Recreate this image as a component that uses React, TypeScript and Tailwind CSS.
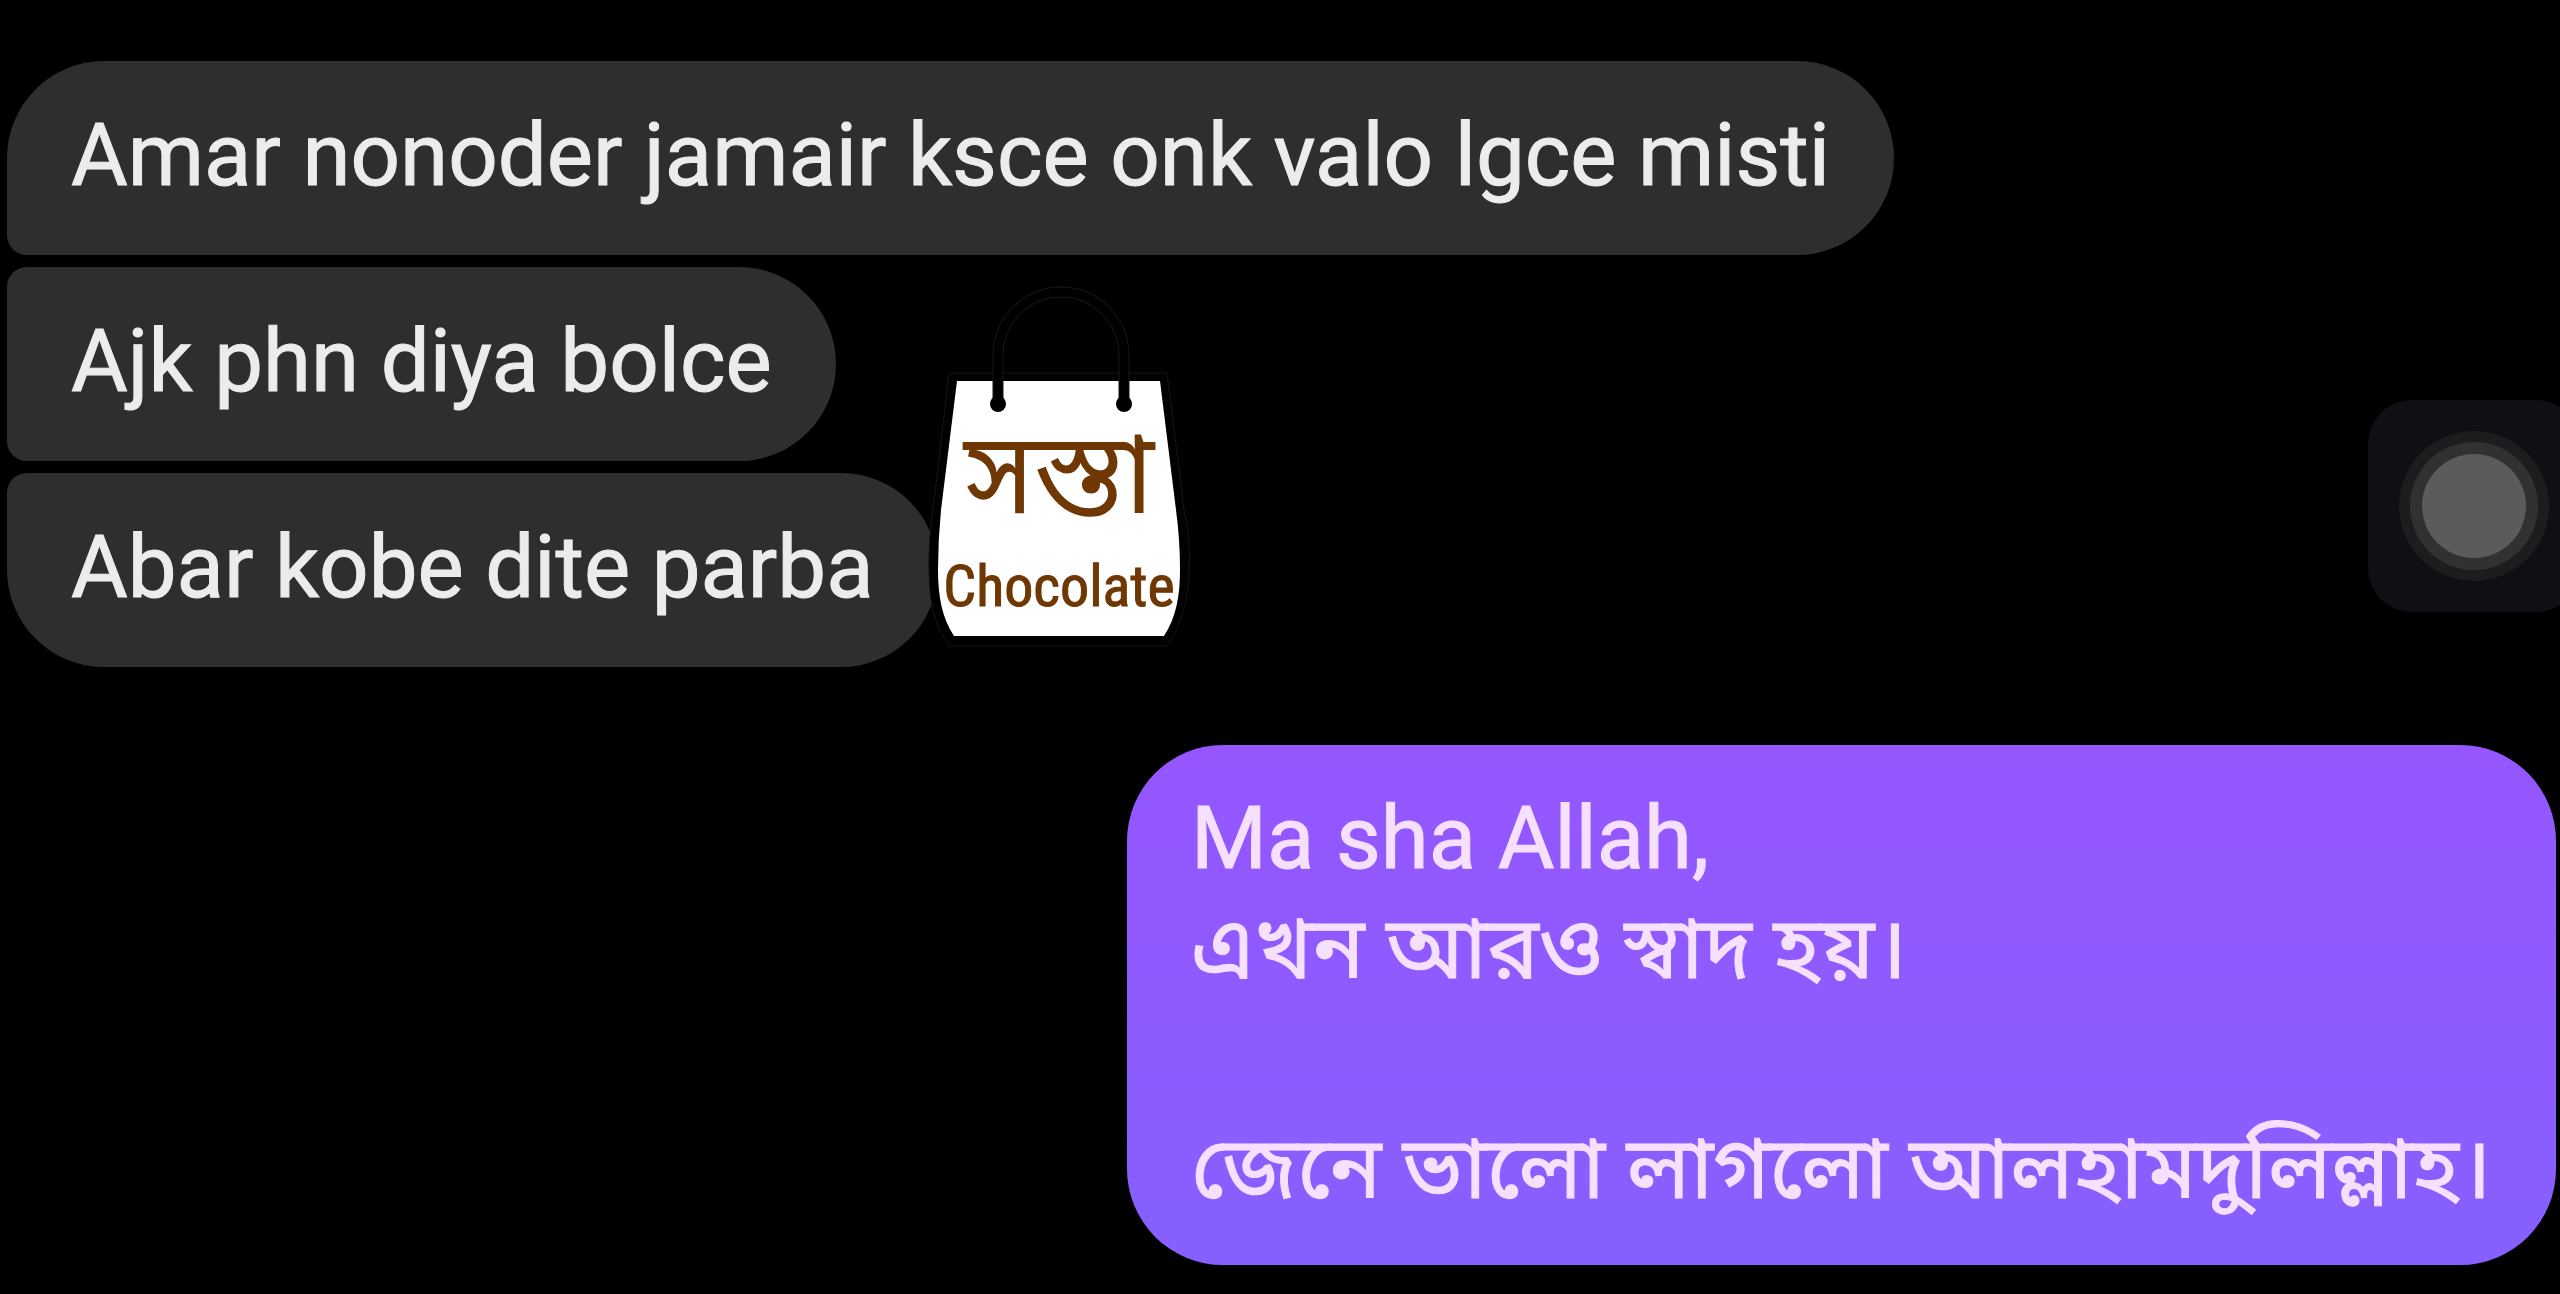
type ReceivedMessage = {
  id: string;
  text: string;
  shape: string;
};

const OPENING: ReceivedMessage = {
  id: "m1",
  text: "Amar nonoder jamair ksce onk valo lgce misti",
  shape: "rounded-[97px] rounded-bl-[20px]",
};

const FOLLOW_UPS: ReceivedMessage[] = [
  { id: "m2", text: "Ajk phn diya bolce", shape: "rounded-r-[97px] rounded-l-[20px]" },
  { id: "m3", text: "Abar kobe dite parba", shape: "rounded-[97px] rounded-tl-[20px]" },
];

function ReceivedBubble({ message }: { message: ReceivedMessage }) {
  return (
    <p
      className={`w-fit bg-[#2e2e2e] px-16 pt-[39px] pb-[45px] text-[87px] leading-[110px] text-[#ececec] [-webkit-text-stroke:1px_#ececec] ${message.shape}`}
    >
      {message.text}
    </p>
  );
}

function SentBubble() {
  return (
    <div className="w-fit self-end rounded-[96px] bg-linear-to-b from-[#9556ff] to-[#8660ff] px-16 pt-[38px] pb-[42px] text-[87px] leading-[110px] text-[#f6e0ff] [-webkit-text-stroke:1px_#f6e0ff]">
      <p>Ma sha Allah,</p>
      <p lang="bn">এখন আরও স্বাদ হয়।</p>
      <p className="mt-[110px]" lang="bn">
        জেনে ভালো লাগলো আলহামদুলিল্লাহ।
      </p>
    </div>
  );
}

function ShopBag() {
  return (
    <svg
      viewBox="0 0 320 400"
      className="absolute bottom-[7px] left-full -ml-[38px] h-[400px] w-[320px]"
      role="img"
      aria-label="সস্তা Chocolate"
    >
      <path
        d="M49 113H267L284 250Q291 280 289 315Q286 362 266 386H50Q30 362 29 315Q28 280 33 250Z"
        fill="#000"
        stroke="#151515"
        strokeWidth="1"
      />
      <path
        d="M57 121H260L276 250Q280 280 280 310C280 336 276 358 264 376H54C42 358 38 336 38 310Q38 280 41 250Z"
        fill="#fff"
      />
      <path
        d="M98 144V96A63 64 0 0 1 224 96V144"
        fill="none"
        stroke="#171717"
        strokeWidth="11"
      />
      <path d="M98 144V96A63 64 0 0 1 224 96V144" fill="none" stroke="#000" strokeWidth="9" />
      <circle cx="98" cy="144" r="8" />
      <circle cx="224" cy="144" r="8" />
      <text x="159" y="253" textAnchor="middle" fontSize="114" fill="#6f3703">
        সস্তা
      </text>
      <text
        x="159"
        y="346"
        textAnchor="middle"
        fontSize="58"
        fill="#6f3703"
        stroke="#6f3703"
        strokeWidth="1"
        className="font-['Roboto_Condensed',Roboto,sans-serif]"
      >
        Chocolate
      </text>
    </svg>
  );
}

function AssistButton() {
  return (
    <button
      type="button"
      aria-label="Assistive touch"
      className="absolute top-[400px] -right-5 flex size-[212px] items-center justify-center rounded-[44px] bg-[#0e1013]"
    >
      <span className="flex size-[150px] items-center justify-center rounded-full bg-[#1b1d1f]">
        <span className="flex size-[128px] items-center justify-center rounded-full bg-[#303132]">
          <span className="size-[104px] rounded-full bg-[#5b5b5b]" />
        </span>
      </span>
    </button>
  );
}

export default function App() {
  return (
    <main className="relative flex min-h-screen flex-col overflow-hidden bg-black pt-[61px] pr-1 pb-7 pl-[7px] font-[Roboto,'Noto_Sans_Bengali',sans-serif]">
      <div className="flex flex-col gap-3">
        <ReceivedBubble message={OPENING} />
        <div className="relative flex w-fit flex-col gap-3">
          {FOLLOW_UPS.map((message) => (
            <ReceivedBubble key={message.id} message={message} />
          ))}
          <ShopBag />
        </div>
      </div>
      <div className="mt-[78px] flex flex-col">
        <SentBubble />
      </div>
      <AssistButton />
    </main>
  );
}
